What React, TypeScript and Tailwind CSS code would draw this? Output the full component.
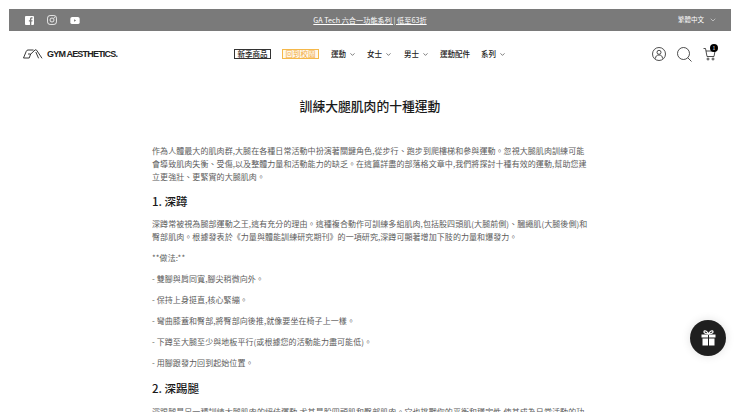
import { ChevronDown } from "lucide-react";

const font = "[font-family:'Noto_Sans_CJK_TC','Noto_Sans_CJK_SC',sans-serif]";

const navItems = [
  { label: "運動", width: "w-[36px]" },
  { label: "女士", width: "w-[37px]" },
  { label: "男士", width: "w-[36px]" },
];

const steps = [
  "- 雙腳與肩同寬,腳尖稍微向外。",
  "- 保持上身挺直,核心緊繃。",
  "- 彎曲膝蓋和臀部,將臀部向後推,就像要坐在椅子上一樣。",
  "- 下蹲至大腿至少與地板平行(或根據您的活動能力盡可能低)。",
  "- 用腳跟發力回到起始位置。",
];

function Facebook() {
  return (
    <svg width="9" height="9" viewBox="0 0 10 10">
      <rect width="10" height="10" rx="1" fill="#fff" />
      <path d="M7 10V6.200h1.200l.2-1.500H7v-1c0-.5.2-.8.8-.8h.7V1.600C8.200 1.500 7.800 1.500 7.400 1.500 6.200 1.500 5.500 2.200 5.500 3.500v1.200H4.300v1.500h1.200V10z" fill="#7a7a7a" />
    </svg>
  );
}

function Instagram() {
  return (
    <svg width="10" height="10" viewBox="0 0 11 11" fill="none" stroke="#fff" strokeWidth="0.9">
      <rect x="0.6" y="0.6" width="9.800" height="9.800" rx="2.800" />
      <circle cx="5.500" cy="5.500" r="2.200" />
      <circle cx="8.200" cy="2.800" r="0.300" />
    </svg>
  );
}

function Youtube() {
  return (
    <svg width="10" height="7" viewBox="0 0 10 7.500">
      <rect width="10" height="7.500" rx="2" fill="#fff" />
      <path d="M4 2.500v2.500l2.200-1.250z" fill="#7a7a7a" />
    </svg>
  );
}

function Logo() {
  return (
    <svg width="20" height="10" viewBox="0 0 20 10" fill="none" stroke="#222" strokeWidth="0.9">
      <path d="M0.500 9 L3.300 2.200 Q3.800 1 5 1 H10.500 M0.500 9 H6.200 L7.700 5 H5" />
      <path d="M7.800 5 L12 1 Q13 0.300 13.600 1.200 L19 9.300 M12.800 3 L15.600 9.300" />
    </svg>
  );
}

export default function App() {
  return (
    <div className={`relative h-[412px] w-[740px] overflow-hidden bg-white ${font}`}>
      <div className="px-[9px] pt-[9px]">
        <div className="flex h-[22px] items-center bg-[#7a7a7a] text-white">
          <div className="flex w-[250px] items-center gap-[13px] pl-[16px]">
            <Facebook />
            <Instagram />
            <Youtube />
          </div>
          <a className="w-[222px] text-center text-[7.200px] underline underline-offset-1">
            GA Tech 六合一功能系列 | 低至63折
          </a>
          <div className="ml-auto flex items-center gap-[5px] pr-[14px] text-[6.500px]">
            <span>繁體中文</span>
            <ChevronDown size={8} strokeWidth={1.500} />
          </div>
        </div>
      </div>

      <header className="flex h-[46px] items-center pl-[23px] pr-[24px]">
        <div className="flex w-[211px] items-center gap-[4px]">
          <Logo />
          <span className="pt-[1px] [font-family:'Liberation_Sans',sans-serif] text-[9px] font-bold tracking-[-0.8px] text-[#222]">
            GYM AESTHETICS.
          </span>
        </div>
        <nav className="flex items-center text-[7.500px] font-medium text-[#222]">
          <span className="mr-[11px] flex h-[10px] w-[37px] items-center justify-center border border-[#333]">
            新季商品
          </span>
          <span className="mr-[12px] flex h-[10px] w-[37px] items-center justify-center border border-[#f5b84a] bg-[#fff8e8] font-normal text-[#f2a93b]">
            回到校園
          </span>
          {navItems.map((item) => (
            <span key={item.label} className={`flex items-center gap-[3px] ${item.width}`}>
              {item.label}
              <ChevronDown size={7} strokeWidth={2} color="#222" />
            </span>
          ))}
          <span className="mr-[11px]">運動配件</span>
          <span className="flex items-center gap-[3px]">
            系列
            <ChevronDown size={7} strokeWidth={2} color="#222" />
          </span>
        </nav>
        <div className="ml-auto flex items-center">
          <svg className="mr-[11px]" width="14" height="14" viewBox="0 0 14 14" fill="none" stroke="#222" strokeWidth="0.8">
            <circle cx="7" cy="7" r="6.500" />
            <circle cx="7" cy="5.300" r="2" />
            <path d="M3.500 11.500c0-2.500 1.500-3.500 3.500-3.500s3.500 1 3.500 3.500" />
          </svg>
          <svg className="mr-[11px]" width="15" height="15" viewBox="0 0 15 15" fill="none" stroke="#222" strokeWidth="0.8">
            <circle cx="6.500" cy="6.500" r="6" />
            <path d="M10.800 10.800 14.500 14.500" />
          </svg>
          <div className="relative h-[14px] w-[13px]">
            <svg width="13" height="14" viewBox="0 0 13 14" fill="none" stroke="#222" strokeWidth="0.8">
              <path d="M0.500 1.500h2l1.500 8h7l1-5.500H3" />
              <circle cx="5" cy="12" r="1" />
              <circle cx="10" cy="12" r="1" />
            </svg>
            <span className="absolute -right-[2px] -top-[3px] flex h-[8px] w-[8px] items-center justify-center rounded-full bg-black text-[5px] text-white">
              1
            </span>
          </div>
        </div>
      </header>

      <main className="mx-auto w-[436px]">
        <h1 className="mt-[17px] text-center text-[12.800px] font-medium leading-[24px] text-[#1a1a1a]">
          訓練大腿肌肉的十種運動
        </h1>
        <div className="mt-[26px] text-[8px] leading-[13px] tracking-[0.07px] text-[#5c5c5c]">
          <p>
            作為人體最大的肌肉群,大腿在各種日常活動中扮演著關鍵角色,從步行、跑步到爬樓梯和參與運動。忽視大腿肌肉訓練可能會導致肌肉失衡、受傷,以及整體力量和活動能力的缺乏。在這篇詳盡的部落格文章中,我們將探討十種有效的運動,幫助您建立更強壯、更緊實的大腿肌肉。
          </p>
          <h2 className="mb-[7px] mt-[9px] text-[11.500px] font-medium leading-[18px] tracking-normal text-[#1a1a1a]">
            1. 深蹲
          </h2>
          <p>
            深蹲常被視為腿部運動之王,這有充分的理由。這種複合動作可訓練多組肌肉,包括股四頭肌(大腿前側)、膕繩肌(大腿後側)和臀部肌肉。根據發表於《力量與體能訓練研究期刊》的一項研究,深蹲可顯著增加下肢的力量和爆發力。
          </p>
          <p className="mt-[8px]">**做法:**</p>
          {steps.map((step) => (
            <p key={step} className="mt-[8px]">
              {step}
            </p>
          ))}
          <h2 className="mb-[8px] mt-[10px] text-[11.500px] font-medium leading-[18px] tracking-normal text-[#1a1a1a]">
            2. 深踢腿
          </h2>
          <p>
            深踢腿是另一種訓練大腿肌肉的絕佳運動,尤其是股四頭肌和臀部肌肉。它也挑戰你的平衡和穩定性,使其成為日常活動的功能性運動。
          </p>
        </div>
      </main>

      <button className="absolute left-[690px] top-[320px] flex h-[36px] w-[36px] items-center justify-center rounded-full bg-[#1f1f1f] shadow-[0_0_10px_rgba(0,0,0,0.12)]">
        <svg width="15" height="16" viewBox="0 0 15 16" fill="#fff">
          <path d="M0.500 4.500h6.500v3H0.500zM8 4.500h6.500v3H8zM1.500 8.500H7V15.500H1.500zM8 8.500h5.500V15.500H8z" />
          <path d="M7.500 4C6 1 3.500 0 3 1.500S5 4 7.500 4c2.500 0 5-1 4.500-2.500S9 1 7.500 4z" fill="none" stroke="#fff" strokeWidth="1.200" />
        </svg>
      </button>
    </div>
  );
}
